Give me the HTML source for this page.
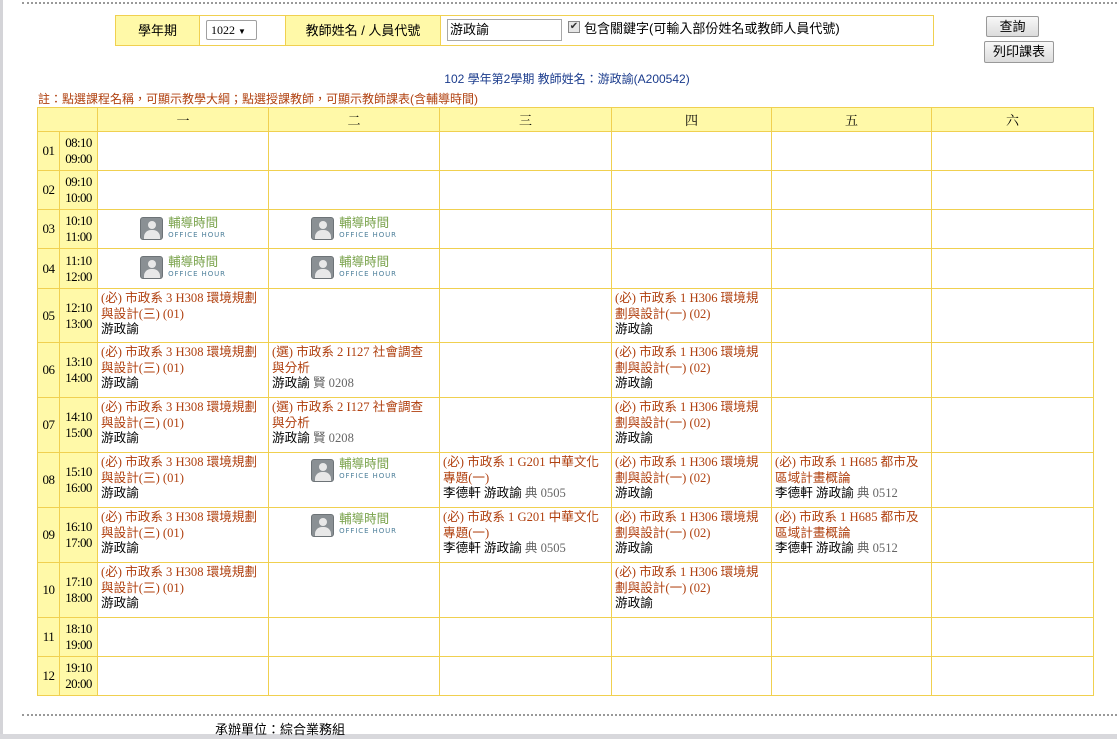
<!DOCTYPE html>
<html><head><meta charset="utf-8">
<style>
*{margin:0;padding:0;box-sizing:border-box}
body{width:1117px;height:739px;background:#fff;position:relative;overflow:hidden;font-family:"Liberation Sans","Noto Sans CJK TC",sans-serif;font-size:12px;color:#000}
.abs{position:absolute}
.dot{position:absolute;left:22px;right:0;height:0;border-top:2px dotted #999}
table.g{position:absolute;left:37px;top:107px;width:1056px;border-collapse:collapse;table-layout:fixed}
table.g td{border:1px solid #f0d050;padding:0;vertical-align:top}
table.g tr.h td{background:#fff9a8;text-align:center;vertical-align:middle;font-family:"Liberation Serif","Noto Serif CJK SC",serif;font-size:13px}
td.p{background:#fff9a8;text-align:center;vertical-align:middle!important;font-family:"Liberation Serif",serif;font-size:13px;letter-spacing:-0.5px}
td.t{background:#fff9a8;text-align:center;vertical-align:middle!important;font-family:"Liberation Serif",serif;font-size:13px;line-height:16px;letter-spacing:-0.6px}
.c{padding:2px 0 0 3px;line-height:15.5px;font-size:12.6px;white-space:nowrap;font-family:"Liberation Serif","Noto Sans CJK TC",serif}
.c .o{color:#b0400f}
.c .g{color:#666}
.oh{display:flex;justify-content:center;align-items:center;height:37px}
.ic{width:23px;height:23px;background:#8a9094;border:1px solid #6d7377;border-radius:3px;position:relative;overflow:hidden;margin-right:5px}
.ic:before{content:"";position:absolute;left:7px;top:3px;width:8px;height:8px;border-radius:50%;background:#e8e8e8}
.ic:after{content:"";position:absolute;left:3px;top:12px;width:16px;height:14px;border-radius:7px 7px 0 0;background:#e8e8e8}
.ot{line-height:12px}
.ot b{display:block;font-weight:normal;color:#7aa34c;font-size:12.5px}
.ot i{display:block;font-style:normal;color:#4d7f9a;font-size:7px;letter-spacing:0.9px;font-family:"DejaVu Sans",sans-serif}
</style></head><body>
<div class="abs" style="left:0;top:0;width:3px;height:739px;background:#d4d4d8"></div>
<div class="abs" style="left:0;top:734px;width:1117px;height:5px;background:#d8d8dc"></div>
<div class="dot" style="top:2px"></div>
<div class="dot" style="top:714px"></div>

<div class="abs" style="left:115px;top:15px;width:819px;height:31px;border:1px solid #f0d050;background:#fff"></div>
<div class="abs" style="left:116px;top:16px;width:83px;height:29px;background:#fff9a8;text-align:center;line-height:29px;font-size:13px">學年期</div>
<div class="abs" style="left:199px;top:16px;width:1px;height:29px;background:#f0d050"></div>
<div class="abs" style="left:206px;top:20px;width:51px;height:20px;border:1px solid #a0a0a0;border-radius:2px;font-family:'Liberation Serif',serif;font-size:12px;line-height:18px;padding-left:4px">1022 <span style="font-size:8px">▼</span></div>
<div class="abs" style="left:285px;top:16px;width:156px;height:29px;background:#fff9a8;border-left:1px solid #f0d050;border-right:1px solid #f0d050;text-align:center;line-height:29px;font-size:13px">教師姓名 / 人員代號</div>
<div class="abs" style="left:447px;top:19px;width:115px;height:22px;border:1px solid #a8a8a8;font-size:13px;line-height:20px;padding-left:2px">游政諭</div>
<div class="abs" style="left:568px;top:21px;width:12px;height:12px;border:1px solid #888;background:#e6e6e6;font-size:10px;line-height:10px;text-align:center;color:#333">✔</div>
<div class="abs" style="left:584px;top:19px;font-size:13px;line-height:20px">包含關鍵字(可輸入部份姓名或教師人員代號)</div>
<div class="abs" style="left:986px;top:16px;width:53px;height:21px;border:1px solid #999;border-radius:2px;background:linear-gradient(#f8f8f8,#dcdcdc);text-align:center;font-size:13px;line-height:19px">查詢</div>
<div class="abs" style="left:984px;top:41px;width:70px;height:22px;border:1px solid #999;border-radius:2px;background:linear-gradient(#f8f8f8,#dcdcdc);text-align:center;font-size:13px;line-height:20px">列印課表</div>

<div class="abs" style="left:0;width:1117px;top:70px;text-align:center;color:#1a3b8c;font-size:12px;padding-left:17px">102 學年第2學期 教師姓名：游政諭(A200542)</div>
<div class="abs" style="left:38px;top:90px;color:#b0400f;font-size:12px">註：點選課程名稱，可顯示教學大綱；點選授課教師，可顯示教師課表(含輔導時間)</div>

<table class="g">
<colgroup><col style="width:22px"><col style="width:38px"><col style="width:171px"><col style="width:171px"><col style="width:172px"><col style="width:160px"><col style="width:160px"><col style="width:162px"></colgroup>
<tr class="h" style="height:24px"><td colspan="2"></td><td>一</td><td>二</td><td>三</td><td>四</td><td>五</td><td>六</td></tr>
<tr style="height:39px"><td class="p">01</td><td class="t">08:10<br>09:00</td><td></td><td></td><td></td><td></td><td></td><td></td></tr>
<tr style="height:39px"><td class="p">02</td><td class="t">09:10<br>10:00</td><td></td><td></td><td></td><td></td><td></td><td></td></tr>
<tr style="height:39px"><td class="p">03</td><td class="t">10:10<br>11:00</td>
<td><div class="oh"><div class="ic"></div><div class="ot"><b>輔導時間</b><i>OFFICE HOUR</i></div></div></td>
<td><div class="oh"><div class="ic"></div><div class="ot"><b>輔導時間</b><i>OFFICE HOUR</i></div></div></td>
<td></td><td></td><td></td><td></td></tr>
<tr style="height:40px"><td class="p">04</td><td class="t">11:10<br>12:00</td>
<td><div class="oh"><div class="ic"></div><div class="ot"><b>輔導時間</b><i>OFFICE HOUR</i></div></div></td>
<td><div class="oh"><div class="ic"></div><div class="ot"><b>輔導時間</b><i>OFFICE HOUR</i></div></div></td>
<td></td><td></td><td></td><td></td></tr>
<tr style="height:54px"><td class="p">05</td><td class="t">12:10<br>13:00</td>
<td><div class="c"><span class="o">(必) 市政系 3 H308 環境規劃<br>與設計(三) (01)</span><br>游政諭</div></td>
<td></td><td></td>
<td><div class="c"><span class="o">(必) 市政系 1 H306 環境規<br>劃與設計(一) (02)</span><br>游政諭</div></td>
<td></td><td></td></tr>
<tr style="height:55px"><td class="p">06</td><td class="t">13:10<br>14:00</td>
<td><div class="c"><span class="o">(必) 市政系 3 H308 環境規劃<br>與設計(三) (01)</span><br>游政諭</div></td>
<td><div class="c"><span class="o">(選) 市政系 2 I127 社會調查<br>與分析</span><br>游政諭 <span class="g">賢 0208</span></div></td>
<td></td>
<td><div class="c"><span class="o">(必) 市政系 1 H306 環境規<br>劃與設計(一) (02)</span><br>游政諭</div></td>
<td></td><td></td></tr>
<tr style="height:55px"><td class="p">07</td><td class="t">14:10<br>15:00</td>
<td><div class="c"><span class="o">(必) 市政系 3 H308 環境規劃<br>與設計(三) (01)</span><br>游政諭</div></td>
<td><div class="c"><span class="o">(選) 市政系 2 I127 社會調查<br>與分析</span><br>游政諭 <span class="g">賢 0208</span></div></td>
<td></td>
<td><div class="c"><span class="o">(必) 市政系 1 H306 環境規<br>劃與設計(一) (02)</span><br>游政諭</div></td>
<td></td><td></td></tr>
<tr style="height:55px"><td class="p">08</td><td class="t">15:10<br>16:00</td>
<td><div class="c"><span class="o">(必) 市政系 3 H308 環境規劃<br>與設計(三) (01)</span><br>游政諭</div></td>
<td><div class="oh" style="height:30px;margin-top:2px"><div class="ic"></div><div class="ot"><b>輔導時間</b><i>OFFICE HOUR</i></div></div></td>
<td><div class="c"><span class="o">(必) 市政系 1 G201 中華文化<br>專題(一)</span><br>李德軒 游政諭 <span class="g">典 0505</span></div></td>
<td><div class="c"><span class="o">(必) 市政系 1 H306 環境規<br>劃與設計(一) (02)</span><br>游政諭</div></td>
<td><div class="c"><span class="o">(必) 市政系 1 H685 都市及<br>區域計畫概論</span><br>李德軒 游政諭 <span class="g">典 0512</span></div></td>
<td></td></tr>
<tr style="height:55px"><td class="p">09</td><td class="t">16:10<br>17:00</td>
<td><div class="c"><span class="o">(必) 市政系 3 H308 環境規劃<br>與設計(三) (01)</span><br>游政諭</div></td>
<td><div class="oh" style="height:30px;margin-top:2px"><div class="ic"></div><div class="ot"><b>輔導時間</b><i>OFFICE HOUR</i></div></div></td>
<td><div class="c"><span class="o">(必) 市政系 1 G201 中華文化<br>專題(一)</span><br>李德軒 游政諭 <span class="g">典 0505</span></div></td>
<td><div class="c"><span class="o">(必) 市政系 1 H306 環境規<br>劃與設計(一) (02)</span><br>游政諭</div></td>
<td><div class="c"><span class="o">(必) 市政系 1 H685 都市及<br>區域計畫概論</span><br>李德軒 游政諭 <span class="g">典 0512</span></div></td>
<td></td></tr>
<tr style="height:55px"><td class="p">10</td><td class="t">17:10<br>18:00</td>
<td><div class="c"><span class="o">(必) 市政系 3 H308 環境規劃<br>與設計(三) (01)</span><br>游政諭</div></td>
<td></td><td></td>
<td><div class="c"><span class="o">(必) 市政系 1 H306 環境規<br>劃與設計(一) (02)</span><br>游政諭</div></td>
<td></td><td></td></tr>
<tr style="height:39px"><td class="p">11</td><td class="t">18:10<br>19:00</td><td></td><td></td><td></td><td></td><td></td><td></td></tr>
<tr style="height:39px"><td class="p">12</td><td class="t">19:10<br>20:00</td><td></td><td></td><td></td><td></td><td></td><td></td></tr>
</table>

<div class="abs" style="left:215px;top:721px;font-size:13px;line-height:18px">承辦單位：綜合業務組</div>
</body></html>
